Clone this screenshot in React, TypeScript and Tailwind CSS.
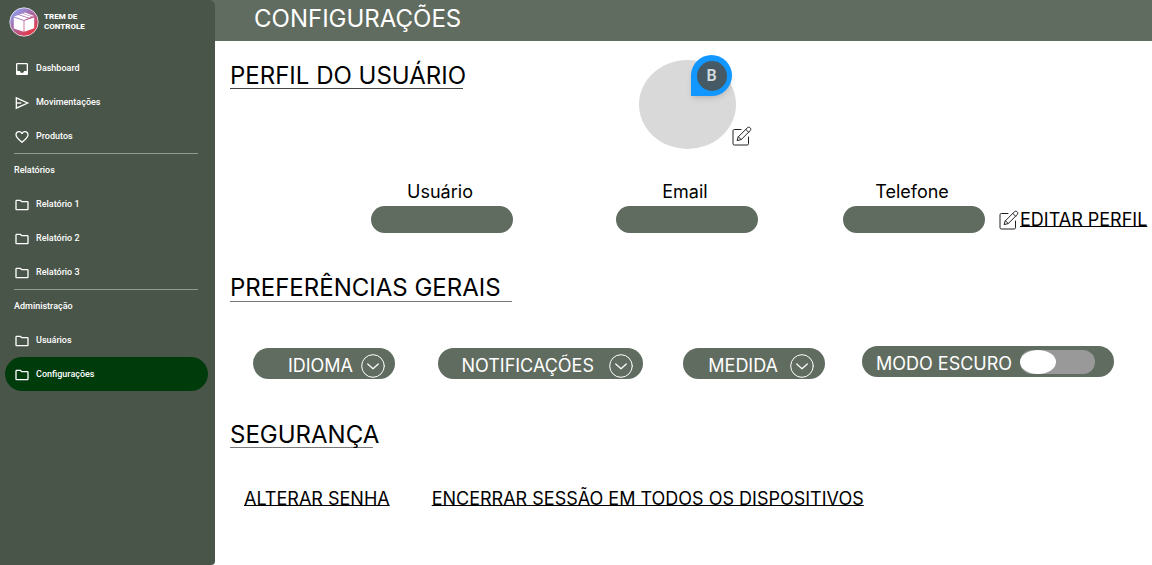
import { useState } from "react";
import type { ReactNode } from "react";
import { MdFavoriteBorder, MdInbox, MdOutlineFolder } from "react-icons/md";

function Logo() {
  return (
    <svg viewBox="0 0 30 30" className="size-[30px] shrink-0" aria-hidden="true">
      <defs>
        <linearGradient id="logo-fill" x1="0.15" y1="0.1" x2="0.8" y2="0.9">
          <stop offset="0" stopColor="#8e9df0" />
          <stop offset="0.5" stopColor="#b0639c" />
          <stop offset="1" stopColor="#e8333f" />
        </linearGradient>
      </defs>
      <circle cx="15" cy="15" r="14.2" fill="url(#logo-fill)" stroke="#dfe3ea" strokeWidth="0.9" />
      <path d="M14.6 13.8v11L4.8 21.4V10.4z M15.4 13.8v11l9.8-3.6V10.4z" fill="#fff" />
      <path d="M4.9 9.5 9.3 7.9l9.8 3.3-4.1 1.7z M10.3 7.5l2.8-.9 9.3 3.1-2.4 1z M14 6.3l2-.8 9.1 3.4-2 .7z" fill="#fff" />
    </svg>
  );
}

function SendIcon() {
  return (
    <svg viewBox="0 0 24 24" className="size-[1em]" fill="none" stroke="currentColor" strokeWidth="2" aria-hidden="true">
      <path d="M3.5 4.2 20.5 12 3.5 19.8V4.2z" />
      <path d="M3.5 12H11" />
    </svg>
  );
}

function EditIcon() {
  return (
    <svg viewBox="0 0 20 20" className="size-5 shrink-0" fill="none" stroke="#222" strokeWidth="1" strokeLinejoin="round" strokeLinecap="round" aria-hidden="true">
      <path d="M9 3.5H2.2c-.7 0-1.2.5-1.2 1.2v13.1c0 .7.5 1.2 1.2 1.2h13.1c.7 0 1.2-.5 1.2-1.2V11" />
      <path d="m6.4 10.8 8.9-8.9c.9-.9 2.1-.9 2.9-.1.8.8.8 2-.1 2.9l-8.9 8.9-3.7.9z" />
      <path d="m13.8 3.4 2.8 2.8M6.4 10.8l2.8 2.8" />
    </svg>
  );
}

function ChevronCircle() {
  return (
    <svg viewBox="0 0 24 24" className="size-6 shrink-0" fill="none" stroke="#fff" strokeWidth="1" strokeLinecap="round" strokeLinejoin="round" aria-hidden="true">
      <circle cx="12" cy="12" r="11.3" />
      <path d="m6.7 10 5.3 4.8 5.3-4.8" strokeWidth="1.2" />
    </svg>
  );
}

function NavItem({ icon, label, active = false }: { icon: ReactNode; label: string; active?: boolean }) {
  return (
    <li>
      <a
        href="#"
        aria-current={active ? "page" : undefined}
        className={`flex h-[34px] items-center gap-[6px] rounded-full pt-px pl-[9px] text-[9px] font-medium ${active ? "bg-[#003b0c]" : ""}`}
      >
        <span className="flex text-[16px]">{icon}</span>
        {label}
      </a>
    </li>
  );
}

function NavGroup({ title, children }: { title: string; children: ReactNode }) {
  return (
    <section>
      <h2 className="mr-[10px] ml-[9px] flex h-[34px] items-center border-t border-[#929a91] pt-px text-[9px] font-medium">{title}</h2>
      <ul>{children}</ul>
    </section>
  );
}

function Sidebar() {
  return (
    <aside className="relative z-10 w-[215px] shrink-0 rounded-tr-md rounded-br-sm bg-[#4a5549] pr-[7px] pl-[5px] font-['Roboto',sans-serif] text-white">
      <div className="flex h-[51px] items-start gap-[5px] pt-[7px] pl-1">
        <Logo />
        <p className="pt-[5px] text-[8px] leading-[10px] font-extrabold">
          TREM DE
          <br />
          CONTROLE
        </p>
      </div>
      <nav aria-label="Principal">
        <ul>
          <NavItem icon={<MdInbox />} label="Dashboard" />
          <NavItem icon={<SendIcon />} label="Movimentações" />
          <NavItem icon={<MdFavoriteBorder />} label="Produtos" />
        </ul>
        <NavGroup title="Relatórios">
          <NavItem icon={<MdOutlineFolder />} label="Relatório 1" />
          <NavItem icon={<MdOutlineFolder />} label="Relatório 2" />
          <NavItem icon={<MdOutlineFolder />} label="Relatório 3" />
        </NavGroup>
        <NavGroup title="Administração">
          <NavItem icon={<MdOutlineFolder />} label="Usuários" />
          <NavItem icon={<MdOutlineFolder />} label="Configurações" active />
        </NavGroup>
      </nav>
    </aside>
  );
}

function Field({ id, label, type }: { id: string; label: string; type: string }) {
  return (
    <div className="flex w-[142px] flex-col items-center">
      <label htmlFor={id} className="pr-1 text-[18px] leading-7">
        {label}
      </label>
      <input id={id} type={type} className="h-[27px] w-full rounded-full bg-[#616c60] px-4 text-sm text-white outline-none" />
    </div>
  );
}

function MenuButton({ label, className }: { label: string; className: string }) {
  return (
    <button type="button" aria-haspopup="listbox" className={`mt-0.5 flex h-[31px] items-center justify-end rounded-full bg-[#616c60] pt-1 text-[18px] text-white ${className}`}>
      {label}
      <ChevronCircle />
    </button>
  );
}

export default function App() {
  const [dark, setDark] = useState(false);
  return (
    <div className="flex min-h-screen bg-white font-['Inter',sans-serif] text-black">
      <Sidebar />
      <div className="min-w-0 flex-1">
        <header className="-ml-2 flex h-[41px] items-center bg-[#616c60] pb-[3px] pl-[47px]">
          <h1 className="text-[24px] leading-8 text-white">CONFIGURAÇÕES</h1>
        </header>
        <main className="pl-[15px]">
          <section>
            <div className="flex pt-[19px]">
              <h2 className="h-[29px] w-[233px] border-b border-[#444] text-[24px] leading-8 whitespace-nowrap">PERFIL DO USUÁRIO</h2>
              <div className="relative ml-[176px] h-[89px] w-[97px] rounded-[50%] bg-[#d9d9d9]">
                <div className="absolute -top-[5px] left-[52px] flex size-[41px] items-center justify-center rounded-full rounded-bl-none bg-[#1197ff] shadow-md">
                  <span className="flex size-[30px] items-center justify-center rounded-full bg-[#455a64] font-['Roboto',sans-serif] text-base font-semibold text-[#d5dce0]">B</span>
                </div>
                <button type="button" aria-label="Editar foto" className="absolute -right-4 bottom-[3px]">
                  <EditIcon />
                </button>
              </div>
            </div>
            <div className="flex items-end pt-[29px] pl-[141px]">
              <Field id="usuario" label="Usuário" type="text" />
              <div className="w-[103px]" />
              <Field id="email" label="Email" type="email" />
              <div className="w-[85px]" />
              <Field id="telefone" label="Telefone" type="tel" />
              <a href="#" className="mb-px ml-[14px] flex items-center gap-px text-[18px] leading-6 whitespace-nowrap">
                <EditIcon />
                <span className="underline decoration-1 underline-offset-0 [text-decoration-skip-ink:none]">EDITAR PERFIL</span>
              </a>
            </div>
          </section>
          <section className="pt-10">
            <h2 className="h-[29px] w-[282px] border-b border-[#777] text-[24px] leading-[30px] whitespace-nowrap">PREFERÊNCIAS GERAIS</h2>
            <div className="flex items-start pt-11 pl-[23px]">
              <MenuButton label="IDIOMA" className="mr-[43px] w-[142px] gap-2 pr-[10px]" />
              <MenuButton label="NOTIFICAÇÕES" className="mr-10 w-[205px] gap-[15px] pr-[10px]" />
              <MenuButton label="MEDIDA" className="mr-[37px] w-[142px] gap-3 pr-[11px]" />
              <label className="flex h-[31px] w-[252px] items-center gap-2 rounded-full bg-[#616c60] pl-[14px] text-[18px] whitespace-nowrap text-white">
                <span className="pt-1">MODO ESCURO</span>
                <input
                  type="checkbox"
                  role="switch"
                  checked={dark}
                  onChange={(e) => setDark(e.target.checked)}
                  className="h-6 w-[75px] appearance-none rounded-full bg-[#999] before:block before:h-6 before:w-9 before:rounded-[50%] before:bg-white checked:before:ml-auto"
                />
              </label>
            </div>
          </section>
          <section className="pt-10">
            <h2 className="h-[29px] w-[143px] border-b border-[#777] text-[24px] leading-8 whitespace-nowrap">SEGURANÇA</h2>
            <div className="flex gap-[42px] pt-[39px] pl-[14px] text-[18px] leading-6 whitespace-nowrap">
              <a href="#" className="underline decoration-1 underline-offset-0 [text-decoration-skip-ink:none]">ALTERAR SENHA</a>
              <a href="#" className="underline decoration-1 underline-offset-0 [text-decoration-skip-ink:none]">ENCERRAR SESSÃO EM TODOS OS DISPOSITIVOS</a>
            </div>
          </section>
        </main>
      </div>
    </div>
  );
}
